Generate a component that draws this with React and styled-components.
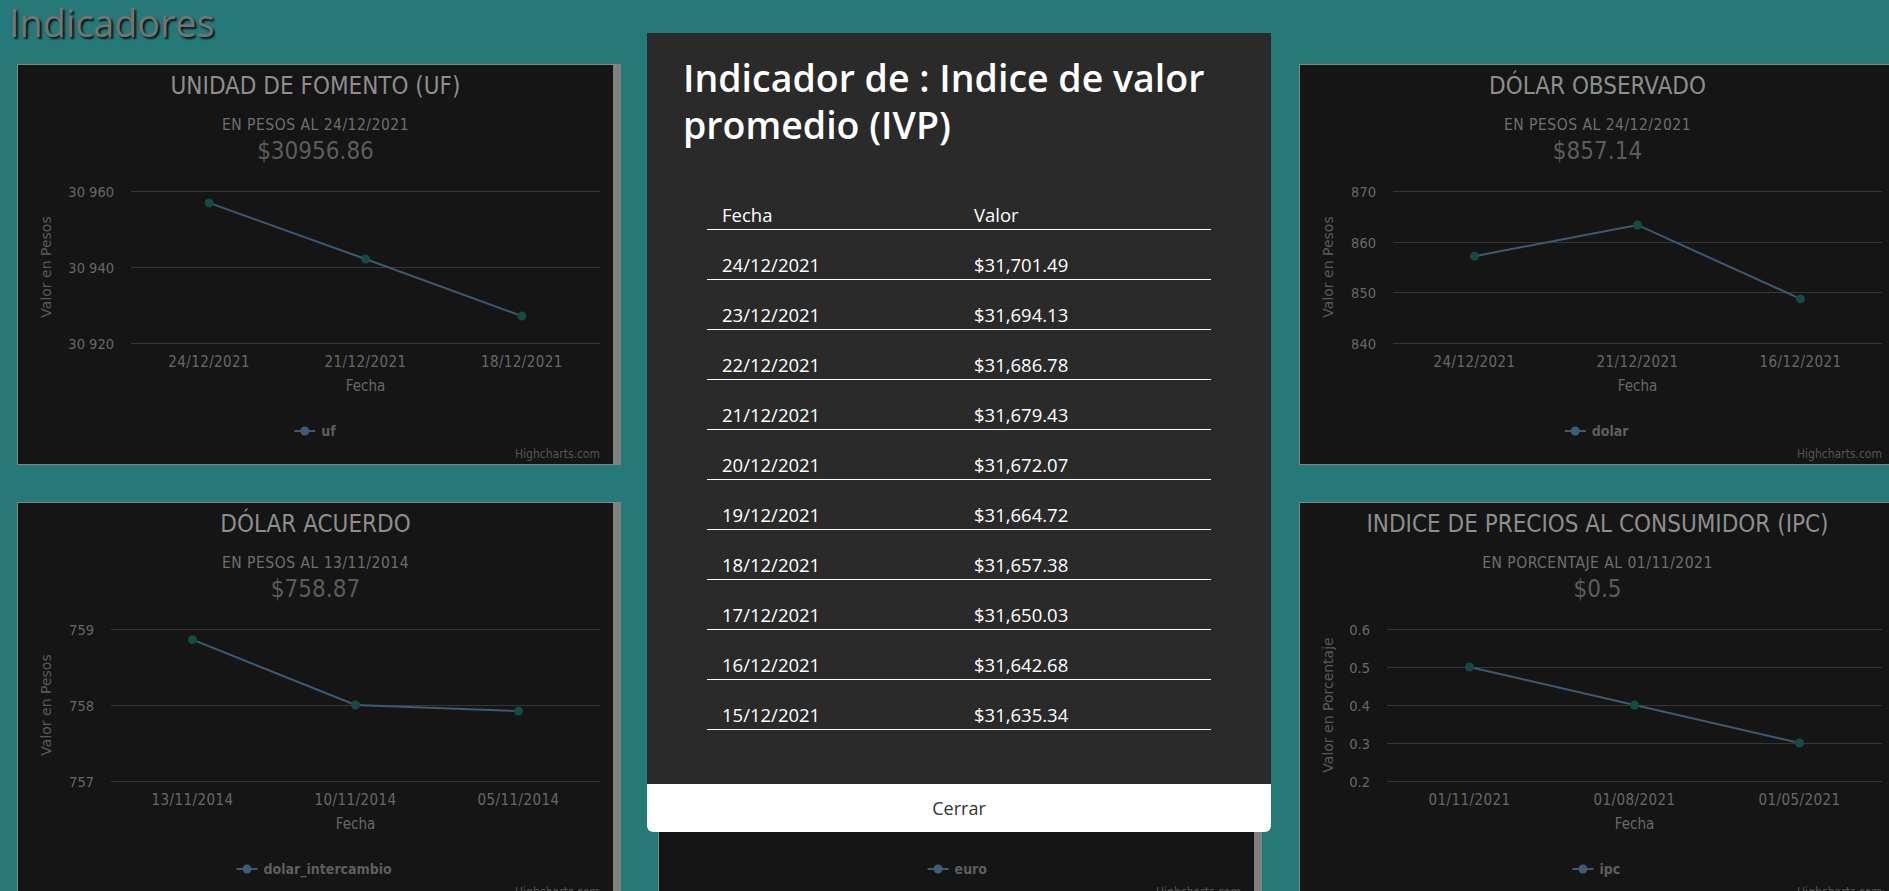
import styled, { createGlobalStyle } from 'styled-components';

const GlobalStyle = createGlobalStyle`
  html, body {
    margin: 0;
    padding: 0;
    overflow: hidden;
    background: #257978;
  }
`;

const Page = styled.div`
  position: relative;
  width: 1918px;
  min-height: 891px;
  font-family: "Open Sans", "Noto Sans", sans-serif;
`;

const Heading = styled.h1`
  margin: 0 0 19px;
  padding-left: 9px;
  font-size: 37.7px;
  font-weight: 400;
  line-height: 1.2;
  color: #747474;
  text-shadow: 2px 2px 2px #111;
`;

const Grid = styled.div`
  display: grid;
  grid-template-columns: repeat(3, 604px);
  gap: 37px;
  padding-left: 17px;
`;

const Card = styled.div`
  box-sizing: border-box;
  width: 604px;
  height: 401px;
  background: #151515;
  border: 1px solid #838383;
  border-right: 8px solid #808080;

  svg {
    display: block;
  }
`;

const cond = `"DejaVu Sans Condensed", "DejaVu Sans", sans-serif`;

const ChartTitle = styled.text`
  font-family: ${cond};
  font-stretch: condensed;
  font-size: 24px;
  fill: #8e8e8e;
  text-anchor: middle;
`;

const ChartSubtitle = styled.text`
  font-family: ${cond};
  font-stretch: condensed;
  font-size: 15.5px;
  letter-spacing: 0.5px;
  fill: #6f6f6f;
  text-anchor: middle;
`;

const ChartValue = styled.text`
  font-family: ${cond};
  font-stretch: condensed;
  font-size: 24px;
  fill: #5c5c5c;
  text-anchor: middle;
`;

const AxisLabel = styled.text`
  font-family: ${cond};
  font-stretch: condensed;
  font-size: ${(p) => (p.$x ? '15px' : '14.5px')};
  letter-spacing: ${(p) => (p.$x ? '0.4px' : '0')};
  fill: #686868;
  text-anchor: ${(p) => (p.$x ? 'middle' : 'end')};
`;

const AxisTitle = styled.text`
  font-family: ${(p) => (p.$rotated ? '"DejaVu Sans", sans-serif' : cond)};
  font-stretch: ${(p) => (p.$rotated ? 'normal' : 'condensed')};
  font-size: ${(p) => (p.$rotated ? '14px' : '15px')};
  fill: ${(p) => (p.$rotated ? '#5a5a5a' : '#686868')};
  text-anchor: middle;
`;

const LegendText = styled.text`
  font-family: ${cond};
  font-stretch: condensed;
  font-size: 14px;
  font-weight: 700;
  fill: #5e5e5e;
`;

const Credits = styled.text`
  font-family: ${cond};
  font-stretch: condensed;
  font-size: 12px;
  fill: #555;
  text-anchor: end;
`;

const Modal = styled.div`
  position: absolute;
  top: 33px;
  left: 50%;
  transform: translateX(-50%);
  width: 624px;
  background: #2a2a2a;
  border-radius: 0 0 6px 6px;
  color: #fff;
  overflow: hidden;
`;

const ModalBody = styled.div`
  padding: 21px 36px 54px;
`;

const ModalTitle = styled.h2`
  margin: 0;
  font-size: 37.5px;
  font-weight: 600;
  line-height: 47px;
`;

const Table = styled.table`
  width: calc(100% - 48px);
  margin: 46px 24px 0;
  border-collapse: collapse;
  table-layout: fixed;
  font-size: 18.5px;
  line-height: 25px;
`;

const Cell = styled.td`
  padding: ${(p) => (p.$head ? '8px 15px 2px' : '22px 15px 2px')};
  border-bottom: 1px solid #fff;
  text-align: left;
  font-weight: 400;
`;

const CloseButton = styled.button`
  display: block;
  width: 100%;
  height: 48px;
  border: 0;
  background: #fff;
  color: #333;
  font-family: "Open Sans", sans-serif;
  font-size: 18px;
  cursor: pointer;
`;

const PLOT_TOP = 126;
const PLOT_BOTTOM = 278;
const PLOT_RIGHT = 582;
const CENTER = 297.5;

const charts = [
  {
    title: 'UNIDAD DE FOMENTO (UF)',
    subtitle: 'EN PESOS AL 24/12/2021',
    value: '$30956.86',
    yTitle: 'Valor en Pesos',
    ticks: [30920, 30940, 30960],
    fmt: (v) => `${Math.floor(v / 1000)} ${String(v % 1000).padStart(3, '0')}`,
    categories: ['24/12/2021', '21/12/2021', '18/12/2021'],
    data: [30956.86, 30942.1, 30927.1],
    series: 'uf',
    plotLeft: 113
  },
  {
    title: 'INDICE DE VALOR PROMEDIO (IVP)',
    subtitle: 'EN PESOS AL 24/12/2021',
    value: '$31701.49',
    yTitle: 'Valor en Pesos',
    ticks: [31650, 31675, 31700, 31725],
    fmt: (v) => `${Math.floor(v / 1000)} ${String(v % 1000).padStart(3, '0')}`,
    categories: ['24/12/2021', '21/12/2021', '18/12/2021'],
    data: [31701.49, 31679.43, 31657.38],
    series: 'ivp',
    plotLeft: 113
  },
  {
    title: 'DÓLAR OBSERVADO',
    subtitle: 'EN PESOS AL 24/12/2021',
    value: '$857.14',
    yTitle: 'Valor en Pesos',
    ticks: [840, 850, 860, 870],
    fmt: (v) => String(v),
    categories: ['24/12/2021', '21/12/2021', '16/12/2021'],
    data: [857.14, 863.3, 848.7],
    series: 'dolar',
    plotLeft: 93
  },
  {
    title: 'DÓLAR ACUERDO',
    subtitle: 'EN PESOS AL 13/11/2014',
    value: '$758.87',
    yTitle: 'Valor en Pesos',
    ticks: [757, 758, 759],
    fmt: (v) => String(v),
    categories: ['13/11/2014', '10/11/2014', '05/11/2014'],
    data: [758.86, 758.0, 757.92],
    series: 'dolar_intercambio',
    plotLeft: 93
  },
  {
    title: 'EURO',
    subtitle: 'EN PESOS AL 24/12/2021',
    value: '$969.45',
    yTitle: 'Valor en Pesos',
    ticks: [965, 970, 975],
    fmt: (v) => String(v),
    categories: ['24/12/2021', '21/12/2021', '16/12/2021'],
    data: [969.45, 973.1, 968.2],
    series: 'euro',
    plotLeft: 93
  },
  {
    title: 'INDICE DE PRECIOS AL CONSUMIDOR (IPC)',
    subtitle: 'EN PORCENTAJE AL 01/11/2021',
    value: '$0.5',
    yTitle: 'Valor en Porcentaje',
    ticks: [0.2, 0.3, 0.4, 0.5, 0.6],
    fmt: (v) => v.toFixed(1),
    categories: ['01/11/2021', '01/08/2021', '01/05/2021'],
    data: [0.5, 0.4, 0.3],
    series: 'ipc',
    plotLeft: 87
  }
];

const rows = [
  ['24/12/2021', '$31,701.49'],
  ['23/12/2021', '$31,694.13'],
  ['22/12/2021', '$31,686.78'],
  ['21/12/2021', '$31,679.43'],
  ['20/12/2021', '$31,672.07'],
  ['19/12/2021', '$31,664.72'],
  ['18/12/2021', '$31,657.38'],
  ['17/12/2021', '$31,650.03'],
  ['16/12/2021', '$31,642.68'],
  ['15/12/2021', '$31,635.34']
];

const Chart = ({ chart }) => {
  const { ticks, plotLeft, categories, data } = chart;
  const min = ticks[0];
  const max = ticks[ticks.length - 1];
  const yOf = (v) => PLOT_BOTTOM - ((v - min) / (max - min)) * (PLOT_BOTTOM - PLOT_TOP);
  const step = (PLOT_RIGHT - plotLeft) / categories.length;
  const xOf = (i) => plotLeft + step * (i + 0.5);
  const points = data.map((v, i) => `${xOf(i)},${yOf(v)}`).join(' ');

  // legend is centred: symbol (21) + gap (6) + text
  const legendWidth = 27 + chart.series.length * 7.7;
  const legendX = CENTER - legendWidth / 2;

  return (
    <Card>
      <svg width="595" height="399" viewBox="0 0 595 399">
        <ChartTitle x={CENTER} y="29">{chart.title}</ChartTitle>
        <ChartSubtitle x={CENTER} y="65">{chart.subtitle}</ChartSubtitle>
        <ChartValue x={CENTER} y="94">{chart.value}</ChartValue>

        {ticks.map((t) => {
          const y = Math.round(yOf(t)) + 0.5;
          return (
            <g key={t}>
              <line x1={plotLeft} x2={PLOT_RIGHT} y1={y} y2={y} stroke="#363636" strokeWidth="1" />
              <AxisLabel x={plotLeft - 17} y={y + 5}>{chart.fmt(t)}</AxisLabel>
            </g>
          );
        })}

        <AxisTitle $rotated x="0" y="0" transform={`translate(33 ${(PLOT_TOP + PLOT_BOTTOM) / 2}) rotate(-90)`}>
          {chart.yTitle}
        </AxisTitle>

        {categories.map((c, i) => (
          <AxisLabel $x key={c} x={xOf(i)} y="302">{c}</AxisLabel>
        ))}
        <AxisTitle x={(plotLeft + PLOT_RIGHT) / 2} y="326">Fecha</AxisTitle>

        <polyline points={points} fill="none" stroke="#3b5a76" strokeWidth="2" />
        {data.map((v, i) => (
          <circle key={i} cx={xOf(i)} cy={yOf(v)} r="4.5" fill="#134b47" />
        ))}

        <g>
          <line x1={legendX} x2={legendX + 21} y1="366" y2="366" stroke="#3b5a76" strokeWidth="2" />
          <circle cx={legendX + 10.5} cy="366" r="4.5" fill="#3d5c7a" />
          <LegendText x={legendX + 27} y="371">{chart.series}</LegendText>
        </g>

        <Credits x={PLOT_RIGHT} y="393">Highcharts.com</Credits>
      </svg>
    </Card>
  );
};

const App = () => {
  return (
    <Page>
      <GlobalStyle />
      <Heading>Indicadores</Heading>
      <Grid>
        {charts.map((c) => (
          <Chart key={c.series} chart={c} />
        ))}
      </Grid>

      <Modal>
        <ModalBody>
          <ModalTitle>Indicador de : Indice de valor promedio (IVP)</ModalTitle>
          <Table>
            <thead>
              <tr>
                <Cell as="th" $head>Fecha</Cell>
                <Cell as="th" $head>Valor</Cell>
              </tr>
            </thead>
            <tbody>
              {rows.map(([fecha, valor]) => (
                <tr key={fecha}>
                  <Cell>{fecha}</Cell>
                  <Cell>{valor}</Cell>
                </tr>
              ))}
            </tbody>
          </Table>
        </ModalBody>
        <CloseButton>Cerrar</CloseButton>
      </Modal>
    </Page>
  );
};

export default App;
